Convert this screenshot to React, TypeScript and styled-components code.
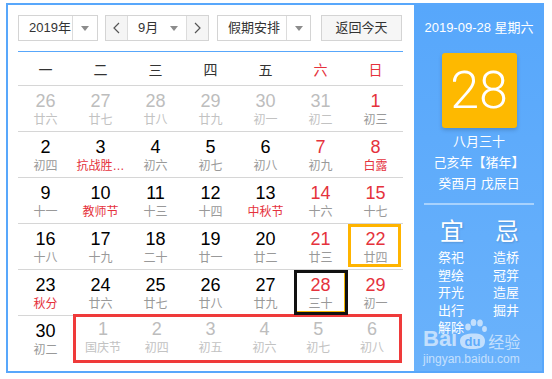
import React from "react";
import styled, { createGlobalStyle } from "styled-components";

const BLUE = "#58a7fb";
const RED = "#e5323c";
const FONT = `"Liberation Sans", "Noto Sans CJK SC", sans-serif`;

const GlobalStyle = createGlobalStyle`
  html, body { margin: 0; padding: 0; background: #fff; }
  body { font-family: ${FONT}; color: #333; }
`;

const Widget = styled.div`
  margin: 3px 0 0 6px;
  width: 538px;
  height: 370px;
  box-sizing: border-box;
  border: 2px solid ${BLUE};
  display: flex;
  background: #fff;
`;

const Main = styled.div`
  width: 406px;
  flex: none;
  box-sizing: border-box;
  padding: 10px 11px 0 10px;
`;

const Toolbar = styled.div`
  display: flex;
  height: 26px;
  font-size: 13px;
  color: #333;
`;

const SelectBox = styled.div<{ $w: number; $ml?: number }>`
  width: ${(p) => p.$w}px;
  margin-left: ${(p) => p.$ml ?? 0}px;
  box-sizing: border-box;
  border: 1px solid #d4d4d4;
  display: flex;
  background: #fff;
`;

const SelectLabel = styled.div`
  flex: 1;
  padding-left: 10px;
  line-height: 24px;
  white-space: nowrap;
  overflow: hidden;
`;

const ArrowBox = styled.div<{ $w: number; $line?: boolean }>`
  width: ${(p) => p.$w}px;
  flex: none;
  border-left: ${(p) => (p.$line ? "1px solid #dcdcdc" : "none")};
  display: flex;
  align-items: center;
  justify-content: center;
`;

const Caret = styled.span`
  width: 0;
  height: 0;
  border-left: 4px solid transparent;
  border-right: 4px solid transparent;
  border-top: 5px solid #8c8c8c;
`;

const NavBtn = styled.div<{ $side: "l" | "r" }>`
  width: 21px;
  flex: none;
  background: #f5f5f5;
  display: flex;
  align-items: center;
  justify-content: center;
  ${(p) => (p.$side === "l" ? "border-right" : "border-left")}: 1px solid #dcdcdc;
`;

const MonthLabel = styled.div`
  flex: 1;
  display: flex;
  align-items: center;
  justify-content: space-between;
  padding: 0 8px 0 10px;
  line-height: 24px;
`;

const TodayBtn = styled.div`
  width: 81px;
  margin-left: 10px;
  box-sizing: border-box;
  border: 1px solid #d4d4d4;
  background: #f6f6f6;
  text-align: center;
  line-height: 24px;
`;

const Header = styled.div`
  margin-top: 10px;
  border-top: 1px solid ${BLUE};
  height: 33px;
  display: grid;
  grid-template-columns: repeat(7, 55px);
  align-items: center;
  font-size: 14px;
`;

const HeadCell = styled.div<{ $red?: boolean }>`
  text-align: center;
  color: ${(p) => (p.$red ? RED : "#333")};
  line-height: 33px;
  padding-top: 2px;
`;

const Row = styled.div<{ $lined?: boolean }>`
  display: grid;
  grid-template-columns: repeat(7, 55px);
  border-top: ${(p) => (p.$lined ? "1px solid #d6d6d6" : "none")};
`;

const Cell = styled.div<{ $mark?: "select" | "today"; $topLine?: boolean }>`
  position: relative;
  height: 45px;
  box-sizing: border-box;
  padding-top: 5px;
  text-align: center;
  border-top: ${(p) => (p.$topLine ? "1px solid #d6d6d6" : "none")};
  ${(p) => (p.$topLine ? "height: 46px;" : "")}
  &::after {
    content: "";
    display: ${(p) => (p.$mark ? "block" : "none")};
    position: absolute;
    pointer-events: none;
    box-sizing: border-box;
    ${(p) =>
      p.$mark === "select"
        ? "top: 0; left: 0; right: 2px; bottom: 2px; border: 3px solid #ffb400;"
        : "top: 0; left: 1px; right: 0; bottom: 0; border: 3px solid #111; box-shadow: inset -1px -1px 0 #f5b400;"}
  }
`;

const Num = styled.div<{ $tone: "normal" | "red" | "gray" }>`
  font-size: 18px;
  line-height: 20px;
  color: ${(p) => (p.$tone === "red" ? RED : p.$tone === "gray" ? "#bdbdbd" : "#000")};
`;

const Lunar = styled.div<{ $tone: "normal" | "red" | "gray" }>`
  font-size: 12px;
  line-height: 18px;
  white-space: nowrap;
  color: ${(p) => (p.$tone === "red" ? RED : p.$tone === "gray" ? "#c2c2c2" : "#999")};
`;

const Holiday = styled.div`
  grid-column: 2 / span 6;
  height: 49px;
  margin: -1px 1px 0 0;
  box-sizing: border-box;
  border: 3px solid #ef3a3a;
  display: grid;
  grid-template-columns: repeat(6, 1fr);
`;

const HolidayCell = styled.div`
  padding-top: 2px;
  text-align: center;
`;

const Side = styled.div`
  position: relative;
  flex: 1;
  background: linear-gradient(#57a7fb, #6ab2fb);
  color: #fff;
  display: flex;
  flex-direction: column;
  align-items: center;
  padding: 15px 0 0 2px;
  overflow: hidden;
`;

const DateLine = styled.div`
  font-size: 13px;
  line-height: 16px;
  white-space: nowrap;
`;

const BigDay = styled.div`
  margin-top: 17px;
  width: 75px;
  height: 75px;
  border-radius: 3px;
  background: #feb900;
  box-shadow: 0 2px 4px rgba(0, 0, 0, 0.18);
  display: flex;
  align-items: center;
  justify-content: center;
  font-family: Roboto, ${FONT};
  font-weight: 300;
  font-size: 52px;
  color: #fff;
`;

const LunarInfo = styled.div`
  margin-top: 3px;
  font-size: 13px;
  line-height: 21px;
  text-align: center;
  white-space: nowrap;
`;

const Divider = styled.div`
  margin-top: 9px;
  width: 110px;
  height: 2px;
  background: rgba(255, 255, 255, 0.45);
`;

const YiJi = styled.div`
  align-self: flex-start;
  margin: 13px 0 0 22px;
  display: grid;
  grid-template-columns: 55px 55px;
`;

const YiCol = styled.div`
  display: flex;
  flex-direction: column;
`;

const YiHead = styled.div`
  font-size: 24px;
  line-height: 28px;
  padding-left: 2px;
  margin-bottom: 3px;
  text-shadow: 1px 1px 2px rgba(0, 0, 0, 0.15);
`;

const YiItem = styled.div`
  font-size: 13px;
  line-height: 17.5px;
`;

const Watermark = styled.div`
  position: absolute;
  left: 9px;
  top: 313px;
  color: #fff;
  opacity: 0.6;
  pointer-events: none;
`;

const MarkRow = styled.div`
  display: flex;
  align-items: flex-end;
  height: 32px;
`;

const Bai = styled.span`
  font-family: "Liberation Sans", sans-serif;
  font-weight: bold;
  font-size: 22px;
  line-height: 22px;
`;

const Jingyan = styled.span`
  font-family: "Noto Sans CJK SC", sans-serif;
  font-size: 16px;
  line-height: 20px;
  margin-bottom: -1px;
`;

const Url = styled.div`
  margin-top: 2px;
  font-size: 12px;
  line-height: 14px;
  font-family: "Liberation Sans", sans-serif;
`;

type Tone = "normal" | "red" | "gray";
type Day = { d: number; l: string; nt: Tone; lt: Tone; mark?: "select" | "today" };

const mk = (d: number, l: string, nt: Tone, lt: Tone, mark?: "select" | "today"): Day => ({ d, l, nt, lt, mark });

const rows: Day[][] = [
  [
    mk(26, "廿六", "gray", "gray"),
    mk(27, "廿七", "gray", "gray"),
    mk(28, "廿八", "gray", "gray"),
    mk(29, "廿九", "gray", "gray"),
    mk(30, "初一", "gray", "gray"),
    mk(31, "初二", "gray", "gray"),
    mk(1, "初三", "red", "normal"),
  ],
  [
    mk(2, "初四", "normal", "normal"),
    mk(3, "抗战胜…", "normal", "red"),
    mk(4, "初六", "normal", "normal"),
    mk(5, "初七", "normal", "normal"),
    mk(6, "初八", "normal", "normal"),
    mk(7, "初九", "red", "normal"),
    mk(8, "白露", "red", "red"),
  ],
  [
    mk(9, "十一", "normal", "normal"),
    mk(10, "教师节", "normal", "red"),
    mk(11, "十三", "normal", "normal"),
    mk(12, "十四", "normal", "normal"),
    mk(13, "中秋节", "normal", "red"),
    mk(14, "十六", "red", "normal"),
    mk(15, "十七", "red", "normal"),
  ],
  [
    mk(16, "十八", "normal", "normal"),
    mk(17, "十九", "normal", "normal"),
    mk(18, "二十", "normal", "normal"),
    mk(19, "廿一", "normal", "normal"),
    mk(20, "廿二", "normal", "normal"),
    mk(21, "廿三", "red", "normal"),
    mk(22, "廿四", "red", "normal", "select"),
  ],
  [
    mk(23, "秋分", "normal", "red"),
    mk(24, "廿六", "normal", "normal"),
    mk(25, "廿七", "normal", "normal"),
    mk(26, "廿八", "normal", "normal"),
    mk(27, "廿九", "normal", "normal"),
    mk(28, "三十", "red", "normal", "today"),
    mk(29, "初一", "red", "normal"),
  ],
];

const holidays: Day[] = [
  mk(1, "国庆节", "gray", "gray"),
  mk(2, "初四", "gray", "gray"),
  mk(3, "初五", "gray", "gray"),
  mk(4, "初六", "gray", "gray"),
  mk(5, "初七", "gray", "gray"),
  mk(6, "初八", "gray", "gray"),
];

const weekdays = ["一", "二", "三", "四", "五", "六", "日"];

const Chevron = ({ dir }: { dir: "l" | "r" }) => (
  <svg width="7" height="12" viewBox="0 0 7 12">
    <polyline
      points={dir === "l" ? "6,1 1,6 6,11" : "1,1 6,6 1,11"}
      fill="none"
      stroke="#555"
      strokeWidth="1.2"
    />
  </svg>
);

const Paw = () => (
  <svg width="31" height="32" viewBox="0 0 31 32">
    <ellipse cx="11" cy="9" rx="2.8" ry="3.4" fill="#fff" />
    <ellipse cx="16.5" cy="4.5" rx="2.8" ry="3.5" fill="#fff" />
    <ellipse cx="23" cy="5" rx="2.8" ry="3.5" fill="#fff" />
    <ellipse cx="27.5" cy="11" rx="2.4" ry="3" fill="#fff" />
    <path d="M3 23 C3 18 8 16 14 15.5 C21 15 28 16 28 23 C28 29 24 31 15.5 31 C7 31 3 29 3 23 Z" fill="#fff" />
    <text x="15.5" y="28" textAnchor="middle" fontSize="13" fontWeight="bold" fontFamily="Liberation Sans, sans-serif" fill={BLUE}>
      du
    </text>
  </svg>
);

export default function App() {
  return (
    <>
      <GlobalStyle />
      <Widget>
        <Main>
          <Toolbar>
            <SelectBox $w={80}>
              <SelectLabel>2019年</SelectLabel>
              <ArrowBox $w={24} $line>
                <Caret />
              </ArrowBox>
            </SelectBox>
            <SelectBox $w={104} $ml={7}>
              <NavBtn $side="l">
                <Chevron dir="l" />
              </NavBtn>
              <MonthLabel>
                <span>9月</span>
                <Caret />
              </MonthLabel>
              <NavBtn $side="r">
                <Chevron dir="r" />
              </NavBtn>
            </SelectBox>
            <SelectBox $w={94} $ml={8}>
              <SelectLabel>假期安排</SelectLabel>
              <ArrowBox $w={23} $line>
                <Caret />
              </ArrowBox>
            </SelectBox>
            <TodayBtn>返回今天</TodayBtn>
          </Toolbar>

          <Header>
            {weekdays.map((w, i) => (
              <HeadCell key={w} $red={i >= 5}>
                {w}
              </HeadCell>
            ))}
          </Header>

          {rows.map((r, ri) => (
            <Row key={ri} $lined>
              {r.map((c, ci) => (
                <Cell key={ci} $mark={c.mark}>
                  <Num $tone={c.nt}>{c.d}</Num>
                  <Lunar $tone={c.lt}>{c.l}</Lunar>
                </Cell>
              ))}
            </Row>
          ))}

          <Row>
            <Cell $topLine>
              <Num $tone="normal">30</Num>
              <Lunar $tone="normal">初二</Lunar>
            </Cell>
            <Holiday>
              {holidays.map((c, i) => (
                <HolidayCell key={i}>
                  <Num $tone={c.nt}>{c.d}</Num>
                  <Lunar $tone={c.lt}>{c.l}</Lunar>
                </HolidayCell>
              ))}
            </Holiday>
          </Row>
        </Main>

        <Side>
          <DateLine>2019-09-28 星期六</DateLine>
          <BigDay>28</BigDay>
          <LunarInfo>
            <div>八月三十</div>
            <div>己亥年【猪年】</div>
            <div>癸酉月 戊辰日</div>
          </LunarInfo>
          <Divider />
          <YiJi>
            <YiCol>
              <YiHead>宜</YiHead>
              <YiItem>祭祀</YiItem>
              <YiItem>塑绘</YiItem>
              <YiItem>开光</YiItem>
              <YiItem>出行</YiItem>
              <YiItem>解除</YiItem>
            </YiCol>
            <YiCol>
              <YiHead>忌</YiHead>
              <YiItem>造桥</YiItem>
              <YiItem>冠笄</YiItem>
              <YiItem>造屋</YiItem>
              <YiItem>掘井</YiItem>
            </YiCol>
          </YiJi>
          <Watermark>
            <MarkRow>
              <Bai>Bai</Bai>
              <Paw />
              <Jingyan>经验</Jingyan>
            </MarkRow>
            <Url>jingyan.baidu.com</Url>
          </Watermark>
        </Side>
      </Widget>
    </>
  );
}
